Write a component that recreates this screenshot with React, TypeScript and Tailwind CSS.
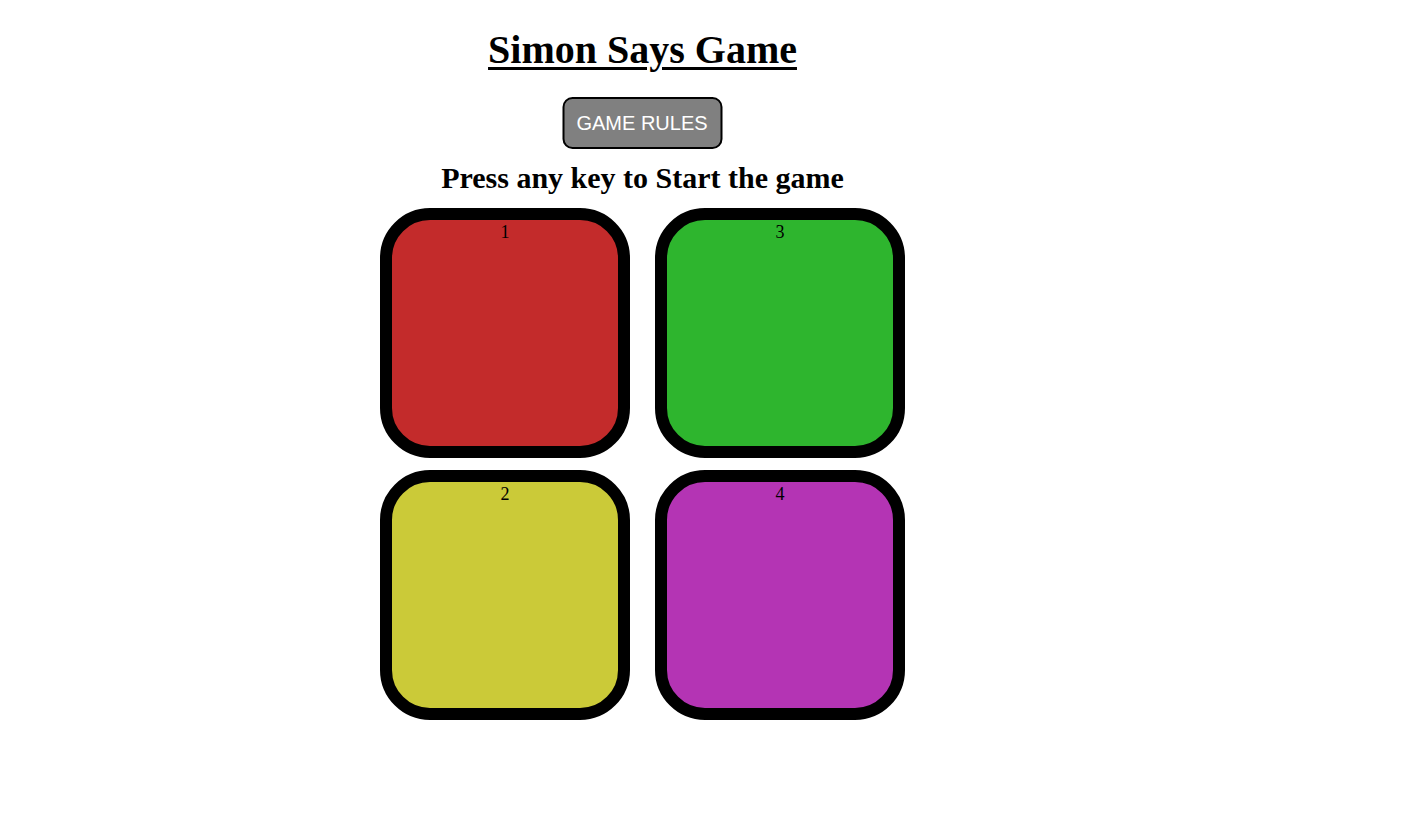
import React from "react"

const pads = [
    { id: 1, color: "bg-[#c32b2b]" },
    { id: 3, color: "bg-[#2eb52e]" },
    { id: 2, color: "bg-[#cbca38]" },
    { id: 4, color: "bg-[#b434b4]" },
]

function Pad({ id, color }: { id: number; color: string }) {
    return (
        <div className={`w-[250px] h-[250px] rounded-[50px] border-[12px] border-black ${color} text-center text-[18px] leading-[21px] pt-[2px] text-black`}>
            {id}
        </div>
    )
}

export default function App() {
    return (
        <div className="min-h-[824px] bg-white font-['Liberation_Serif','Times_New_Roman',serif]">
            <div className="w-[1285px] flex flex-col items-center">
                <h1 className="mt-[27px] text-[40px] leading-[46px] font-bold underline underline-offset-[4px] decoration-[3px]">
                    Simon Says Game
                </h1>
                <button className="mt-[24px] w-[160px] h-[52px] bg-[#808080] text-white border-2 border-black rounded-[10px] font-['Liberation_Sans',Arial,sans-serif] text-[20px] leading-[23px] -translate-x-[0.5px]">
                    GAME RULES
                </button>
                <h2 className="mt-[12px] text-[30px] leading-[34px] font-bold">
                    Press any key to Start the game
                </h2>
                <div className="mt-[13px] grid grid-cols-2 gap-x-[25px] gap-y-[12px]">
                    {pads.map((p) => (
                        <Pad key={p.id} id={p.id} color={p.color} />
                    ))}
                </div>
            </div>
        </div>
    )
}
